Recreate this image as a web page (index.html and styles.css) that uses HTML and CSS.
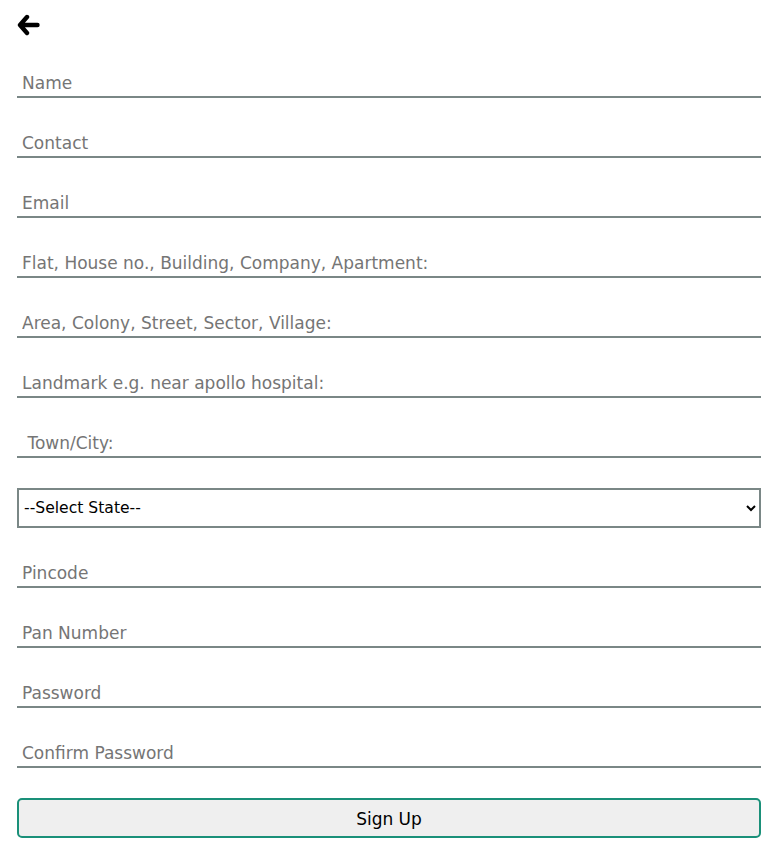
FILE: index.html
```html
<!DOCTYPE html>
<html>
<head>
<meta charset="utf-8">
<link rel="stylesheet" href="styles.css">
</head>
<body>
<form class="form">
  <div class="back">
    <svg width="23" height="22" viewBox="0 0 23 22"><path d="M10 3 L3 11 L10 19 M3.5 11 H20.5" fill="none" stroke="#000" stroke-width="4.4" stroke-linecap="round" stroke-linejoin="round"/></svg>
  </div>
  <input class="field" type="text" placeholder="Name">
  <input class="field" type="text" placeholder="Contact">
  <input class="field" type="text" placeholder="Email">
  <input class="field" type="text" placeholder="Flat, House no., Building, Company, Apartment:">
  <input class="field" type="text" placeholder="Area, Colony, Street, Sector, Village:">
  <input class="field" type="text" placeholder="Landmark e.g. near apollo hospital:">
  <input class="field" type="text" placeholder=" Town/City:">
  <select class="select"><option>--Select State--</option></select>
  <input class="field" type="text" placeholder="Pincode">
  <input class="field" type="text" placeholder="Pan Number">
  <input class="field" type="password" placeholder="Password">
  <input class="field" type="password" placeholder="Confirm Password">
  <button class="btn" type="button">Sign Up</button>
</form>
</body>
</html>
```
FILE: styles.css
```css
html, body { margin: 0; padding: 0; background: #fff; }
body { font-family: "DejaVu Sans", Verdana, sans-serif; }
.form { display: flex; flex-direction: column; padding: 14px 22px 0 17px; }
.back { height: 24px; display: flex; align-items: flex-start; }
.back svg { display: block; }
.field {
  margin-top: 30px; height: 30px; box-sizing: border-box;
  border: none; border-bottom: 2px solid #7a8786; outline: none;
  font-family: "DejaVu Sans", Verdana, sans-serif; font-size: 17px;
  padding: 2px 5px 0; color: #000; background: #fff;
}
.field::placeholder { color: #757575; }
.select {
  margin-top: 30px; height: 40px; box-sizing: border-box;
  border: 2px solid #7a8786; border-radius: 0; background: #fff;
  font-family: "DejaVu Sans", Verdana, sans-serif; font-size: 15.6px; color: #000;
  padding: 0 1px;
}
.btn {
  margin-top: 30px; height: 40px; box-sizing: border-box;
  border: 2px solid #1a9079; border-radius: 5px; background: #efefef;
  font-family: "DejaVu Sans", Verdana, sans-serif; font-size: 17px; color: #000;
  padding: 2px 0 0;
}
```
